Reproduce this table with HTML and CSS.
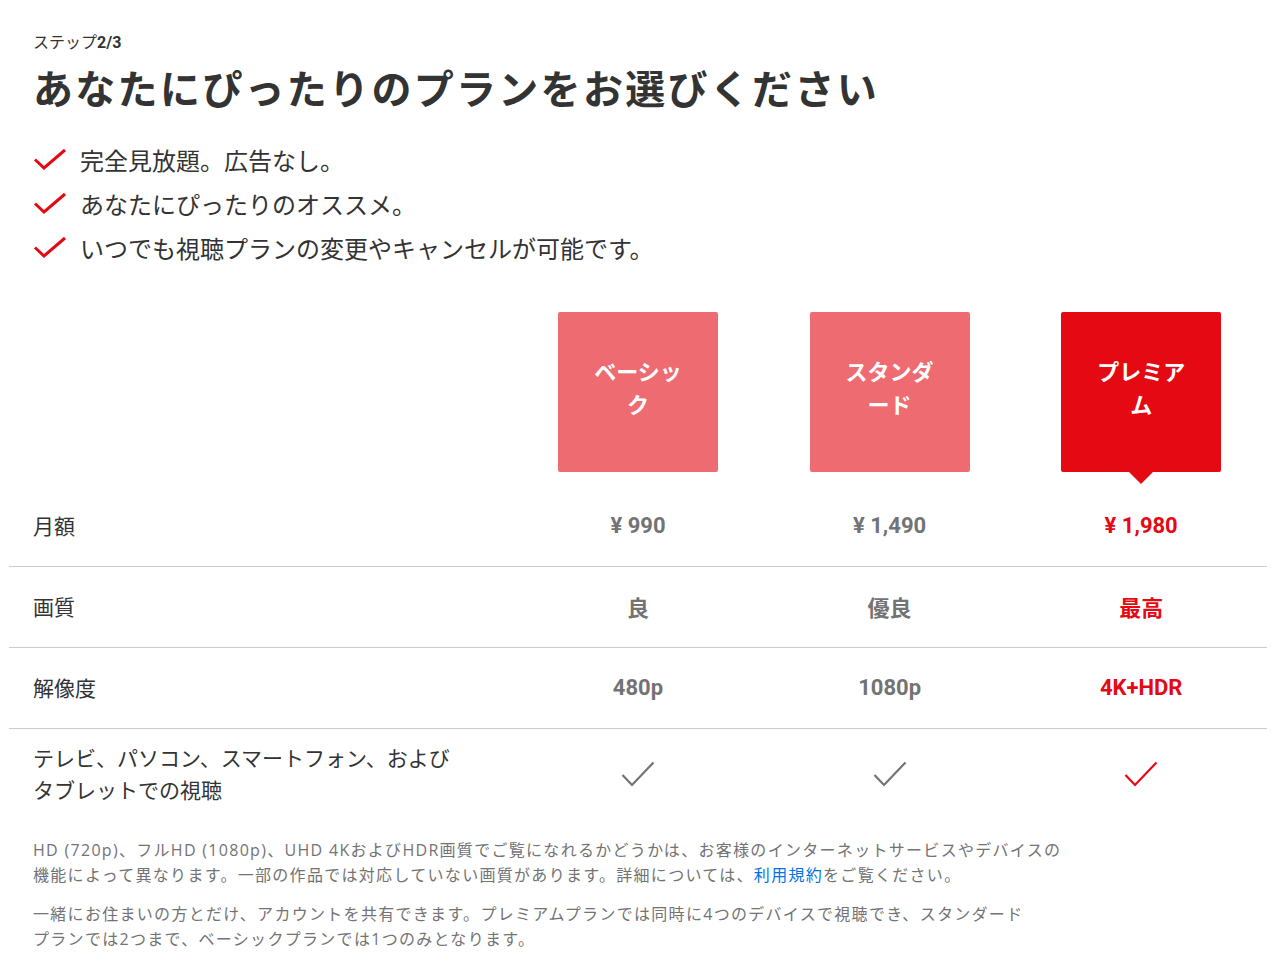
FILE: index.html
```html
<!DOCTYPE html>
<html lang="ja">
<head>
<meta charset="utf-8">
<title>プランを選択</title>
<link rel="stylesheet" href="styles.css">
</head>
<body>
<div class="page">
  <div class="intro">
    <div class="step">ステップ<b>2/3</b></div>
    <h1 class="title">あなたにぴったりのプランをお選びください</h1>
    <ul class="benefits">
      <li><svg class="bcheck" viewBox="0 0 34 24"><path d="M2 12.5 L11 21 L32 3" fill="none" stroke="#e50914" stroke-width="3"/></svg><span>完全見放題。広告なし。</span></li>
      <li><svg class="bcheck" viewBox="0 0 34 24"><path d="M2 12.5 L11 21 L32 3" fill="none" stroke="#e50914" stroke-width="3"/></svg><span>あなたにぴったりのオススメ。</span></li>
      <li><svg class="bcheck" viewBox="0 0 34 24"><path d="M2 12.5 L11 21 L32 3" fill="none" stroke="#e50914" stroke-width="3"/></svg><span>いつでも視聴プランの変更やキャンセルが可能です。</span></li>
    </ul>
  </div>

  <div class="plans">
    <div class="grid header">
      <div></div>
      <div class="cell"><div class="plan-box">ベーシック</div></div>
      <div class="cell"><div class="plan-box">スタンダード</div></div>
      <div class="cell"><div class="plan-box selected">プレミアム</div></div>
    </div>
    <div class="grid row">
      <div class="label">月額</div>
      <div class="cell val">¥ 990</div>
      <div class="cell val">¥ 1,490</div>
      <div class="cell val sel">¥ 1,980</div>
    </div>
    <div class="grid row">
      <div class="label">画質</div>
      <div class="cell val">良</div>
      <div class="cell val">優良</div>
      <div class="cell val sel">最高</div>
    </div>
    <div class="grid row">
      <div class="label">解像度</div>
      <div class="cell val">480p</div>
      <div class="cell val">1080p</div>
      <div class="cell val sel">4K+HDR</div>
    </div>
    <div class="grid row last">
      <div class="label">テレビ、パソコン、スマートフォン、および<br>タブレットでの視聴</div>
      <div class="cell"><svg class="tcheck" viewBox="0 0 34 26"><path d="M1.5 14 L11 24 L32.5 1.5" fill="none" stroke="#737373" stroke-width="2.2"/></svg></div>
      <div class="cell"><svg class="tcheck" viewBox="0 0 34 26"><path d="M1.5 14 L11 24 L32.5 1.5" fill="none" stroke="#737373" stroke-width="2.2"/></svg></div>
      <div class="cell"><svg class="tcheck" viewBox="0 0 34 26"><path d="M1.5 14 L11 24 L32.5 1.5" fill="none" stroke="#e50914" stroke-width="2.2"/></svg></div>
    </div>
  </div>

  <div class="notes">
    <p>HD (720p)、フルHD (1080p)、UHD 4KおよびHDR画質でご覧になれるかどうかは、お客様のインターネットサービスやデバイスの<br>機能によって異なります。一部の作品では対応していない画質があります。詳細については、<a href="#">利用規約</a>をご覧ください。</p>
    <p>一緒にお住まいの方とだけ、アカウントを共有できます。プレミアムプランでは同時に4つのデバイスで視聴でき、スタンダード<br>プランでは2つまで、ベーシックプランでは1つのみとなります。</p>
  </div>
</div>
</body>
</html>
```

FILE: styles.css
```css
* { box-sizing: border-box; }

html, body {
  margin: 0;
  padding: 0;
  background: #fff;
}

body {
  font-family: "Noto Sans CJK JP", "Noto Sans", sans-serif;
  color: #333;
}

.page {
  padding: 29px 13px 0 9px;
}

.intro {
  padding-left: 24px;
}

.step {
  font-size: 16px;
  line-height: 24px;
  color: #333;
}

.step b {
  font-weight: 700;
  font-family: Roboto, "Noto Sans CJK JP", sans-serif;
}

.title {
  margin: 0;
  font-size: 40px;
  line-height: 64px;
  font-weight: 700;
  color: #333;
  letter-spacing: 2.3px;
}

.benefits {
  list-style: none;
  margin: 18px 0 0;
  padding: 0;
}

.benefits li {
  display: flex;
  align-items: center;
  height: 44px;
  font-size: 24px;
  color: #333;
}

.bcheck {
  width: 34px;
  height: 24px;
  margin-right: 13px;
  flex: none;
}

.plans {
  margin-top: 43px;
}

.grid {
  display: grid;
  grid-template-columns: 40% 20% 20% 20%;
}

.header {
  padding-bottom: 14px;
}

.cell {
  display: flex;
  align-items: center;
  justify-content: center;
}

.plan-box {
  position: relative;
  width: 160px;
  height: 160px;
  padding: 0 28px 10px;
  border-radius: 2px;
  background: #ef6b72;
  color: #fff;
  font-size: 22px;
  line-height: 33px;
  font-weight: 700;
  display: flex;
  align-items: center;
  justify-content: center;
  text-align: center;
}

.plan-box.selected {
  background: #e50914;
}

.plan-box.selected::after {
  content: "";
  position: absolute;
  left: 50%;
  top: 100%;
  margin-left: -12px;
  border-left: 12px solid transparent;
  border-right: 12px solid transparent;
  border-top: 12px solid #e50914;
}

.row {
  height: 81px;
  border-bottom: 1px solid #ccc;
}

.row .cell {
  padding-bottom: 2px;
}

.row.last {
  height: auto;
  padding: 12px 0 16px;
  border-bottom: none;
}

.label {
  display: flex;
  align-items: center;
  padding-left: 24px;
  padding-bottom: 3px;
  font-size: 21px;
  line-height: 32px;
  color: #333;
}

.val {
  font-family: Roboto, "Noto Sans CJK JP", sans-serif;
  font-size: 22px;
  font-weight: 700;
  color: #737373;
}

.val.sel {
  color: #e50914;
}

.tcheck {
  width: 34px;
  height: 26px;
}

.notes {
  padding: 14px 0 0 24px;
}

.notes p {
  margin: 0 0 14px;
  font-family: "Open Sans", "Noto Sans CJK JP", sans-serif;
  font-size: 16px;
  line-height: 25px;
  letter-spacing: 1.3px;
  color: #737373;
}

.notes a {
  color: #0071eb;
  text-decoration: none;
}
```
